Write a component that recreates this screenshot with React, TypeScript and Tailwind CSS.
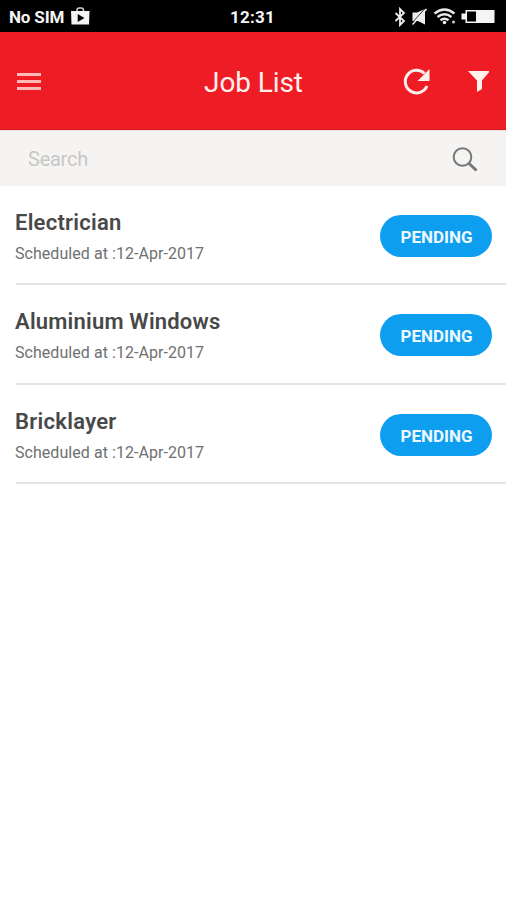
const jobs = [
  { title: "Electrician", date: "12-Apr-2017", row: "h-[99px]", tracking: "tracking-[0.25px]" },
  { title: "Aluminium Windows", date: "12-Apr-2017", row: "h-[100px]", tracking: "tracking-[0.2px]" },
  { title: "Bricklayer", date: "12-Apr-2017", row: "h-[99px]", tracking: "tracking-[0.3px]" },
];

function StatusBar() {
  return (
    <div className="grid h-8 grid-cols-[1fr_auto_1fr] items-center bg-black pt-[2px] pl-[9px] pr-[10px] text-[17px] leading-none font-bold text-[#f4f4f4]">
      <div className="flex items-center gap-[7px]">
        <span className="tracking-[-0.15px]">No SIM</span>
        <svg width="19" height="18" viewBox="0 0 19 18" className="-mt-[2px]">
          <path d="M6 5V3.5Q6 1 8.2 1H10.3Q12.5 1 12.5 3.5V5" fill="none" stroke="#cfcfcf" strokeWidth="1.5" />
          <path fillRule="evenodd" d="M0 4H18.5L18 17.5H.5ZM6.7 7V15L13.5 11Z" fill="#f4f4f4" />
        </svg>
      </div>
      <span className="tracking-[0.2px]">12:31</span>
      <div className="flex items-center justify-end">
        <svg width="102" height="20" viewBox="394 7 102 20" fill="none">
          <path d="M395.5 13L404 21L400 25V9L404 13L395.5 21" stroke="#eee" strokeWidth="1.8" />
          <path d="M412.5 12.5H417L425 9V24.5L418 21H412.5Z" fill="#eee" />
          <path d="M411.500 23.500L425.500 8" stroke="#000" strokeWidth="0.8" />
          <path d="M412.5 24.5L426.5 9" stroke="#eee" strokeWidth="1.5" />
          <path d="M434.5 13.500Q444.500 5.500 454.5 13.500M437.5 17Q444.500 11.500 451.5 17M440.5 20.300Q444.500 17 448.5 20.300" stroke="#e8e8e8" strokeWidth="2.400" />
          <circle cx="444.500" cy="22.500" r="1.800" fill="#eee" />
          <circle cx="453.500" cy="22" r="1.500" fill="#ccc" />
          <path d="M465.500 10H494.500V23H465.500V19.500H461.500V13.500H465.500Z" fill="#f4f4f4" />
          <path d="M467 11.500H476V21.500H467Z" fill="#000" />
        </svg>
      </div>
    </div>
  );
}

function Header() {
  return (
    <header className="grid h-[98px] grid-cols-[1fr_auto_1fr] items-center border-b border-[#d41920] bg-[#ee1c25] px-[17px] text-[#fff0ed]">
      <button aria-label="Menu" className="mt-[1px] flex w-6 flex-col gap-1">
        <span className="h-[3px] bg-[#ffb9b6]" />
        <span className="h-[3px] bg-[#ffb9b6]" />
        <span className="h-[3px] bg-[#ffb9b6]" />
      </button>
      <h1 className="pt-[5px] pl-[1px] text-[28px] leading-8 tracking-[-0.1px]">Job List</h1>
      <div className="flex items-center justify-end">
        <svg width="90" height="32" viewBox="399 65 90 32">
          <path d="M424.500 73.500A11.300 11.300 0 1 0 427 86" fill="none" stroke="currentColor" strokeWidth="3" />
          <path d="M429.500 69V81H417.500Z" fill="currentColor" />
          <path d="M468 71H490L482 80.500V89L477 92V80.500Z" fill="currentColor" />
        </svg>
      </div>
    </header>
  );
}

export default function App() {
  return (
    <div className="min-h-[900px] w-full bg-white font-[Roboto,sans-serif]">
      <StatusBar />
      <Header />
      <div className="flex h-[56px] items-center justify-between border-t border-[#f4dedc] bg-[#f5f4f3] pt-px pr-7 pl-7">
        <span className="text-[20px] tracking-[-0.25px] text-[#c7c7c6]">Search</span>
        <svg width="26" height="26" viewBox="452 145 26 26" fill="none" stroke="#777">
          <circle cx="462.500" cy="156" r="8.800" strokeWidth="2" />
          <path d="M468.500 162L476.500 169.500" strokeWidth="3" />
        </svg>
      </div>
      <ul className="pl-[16px]">
        {jobs.map((job) => (
          <li key={job.title} className={`${job.row} flex items-start justify-between border-b-2 border-[#e4e4e4] pr-[14px]`}>
            <div className="-ml-[1px] pt-[24px]">
              <h2 className={`text-[22px] leading-[26px] font-semibold text-[#484848] ${job.tracking}`}>{job.title}</h2>
              <p className="mt-[8px] text-[16px] leading-5 tracking-[0.05px] text-[#707070]">Scheduled at :{job.date}</p>
            </div>
            <span className="mt-[29px] flex h-[42px] w-[112px] items-center justify-center rounded-full bg-[#0d9eef] pt-[3px] pl-[1px] text-[17px] font-bold text-[#edf8ff]">
              PENDING
            </span>
          </li>
        ))}
      </ul>
    </div>
  );
}
